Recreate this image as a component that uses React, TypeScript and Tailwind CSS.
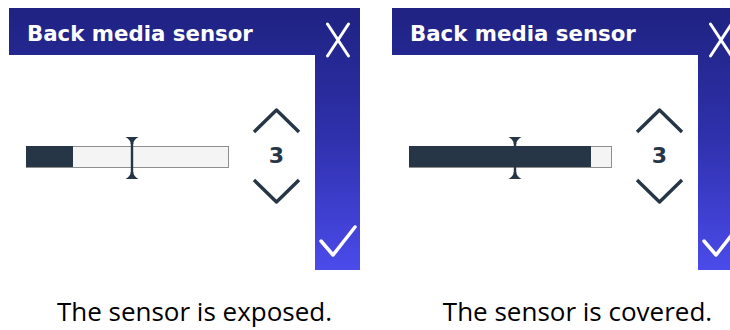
import React from "react";

interface PanelProps {
  fill: number;
  marker: number;
  caption: string;
}

const dark = "#263646";

const Marker = () => (
  <svg width="14" height="42" viewBox="0 0 14 42" className="absolute top-[-10px]">
    <path d="M0.5 0 H13.5 Q8.3 3 8.3 7 H5.7 Q5.7 3 0.5 0 Z" fill={dark} />
    <rect x="5.8" y="6" width="2.4" height="30" fill={dark} />
    <path d="M0.5 42 H13.5 Q8.3 39 8.3 35 H5.7 Q5.7 39 0.5 42 Z" fill={dark} />
  </svg>
);

const Panel = ({ fill, marker, caption }: PanelProps) => {
  return (
    <div className="flex w-[351px] shrink-0 flex-col">
      <div className="flex h-[262px] w-[351px] shrink-0 bg-linear-to-b from-[#1f2281] via-[#2f31ad] to-[#4b4beb]">
        <div className="flex w-[306px] flex-col">
          <div className="h-[47px] pl-[18px] pt-[14px]">
            <div className="text-[21.3px] font-bold leading-[24px] text-white [font-family:'DejaVu_Sans',sans-serif]">
              Back media sensor
            </div>
          </div>
          <div className="flex flex-1 items-start bg-white pl-[17px] pt-[53px]">
            <div className="relative mt-[38px] h-[22px] w-[203px] border border-[#8e8e8e] bg-[#f4f4f4]">
              <div
                className="absolute left-[-1px] top-[-1px] h-[21px]"
                style={{ width: fill, backgroundColor: dark }}
              />
              <div className="absolute top-0" style={{ left: marker - 7 }}>
                <Marker />
              </div>
            </div>
            <div className="ml-[23px] flex w-[49px] flex-col items-center">
              <svg width="49" height="26" viewBox="0 0 49 26">
                <polyline
                  points="2,24 24.5,2 47,24"
                  fill="none"
                  stroke={dark}
                  strokeWidth="3.4"
                  strokeLinejoin="round"
                />
              </svg>
              <div className="flex h-[44px] items-center text-[22px] font-bold leading-[26px] text-[#263646] [font-family:'DejaVu_Sans',sans-serif]">
                3
              </div>
              <svg width="49" height="26" viewBox="0 0 49 26">
                <polyline
                  points="2,2 24.5,24 47,2"
                  fill="none"
                  stroke={dark}
                  strokeWidth="3.4"
                  strokeLinejoin="round"
                />
              </svg>
            </div>
          </div>
        </div>
        <div className="flex w-[45px] flex-col items-center justify-between pb-[12px] pt-[14px]">
          <svg width="26" height="36" viewBox="0 0 26 36">
            <path d="M2.5 2 L23.5 34 M23.5 2 L2.5 34" stroke="white" strokeWidth="3" strokeLinecap="round" fill="none" />
          </svg>
          <svg width="40" height="34" viewBox="0 0 40 34">
            <path d="M3 17 L15 31 L37 3" stroke="white" strokeWidth="3.5" strokeLinecap="round" strokeLinejoin="round" fill="none" />
          </svg>
        </div>
      </div>
      <div className="mt-[26px] pl-[20px] text-center text-[26px] leading-[30px] text-black [font-family:'Open_Sans',sans-serif]">
        {caption}
      </div>
    </div>
  );
};

const App = () => {
  return (
    <div className="flex h-[330px] w-[730px] gap-[32px] overflow-hidden bg-white pl-[9px] pt-[8px]">
      <Panel fill={47} marker={105} caption="The sensor is exposed." />
      <Panel fill={182} marker={105} caption="The sensor is covered." />
    </div>
  );
};

export default App;
